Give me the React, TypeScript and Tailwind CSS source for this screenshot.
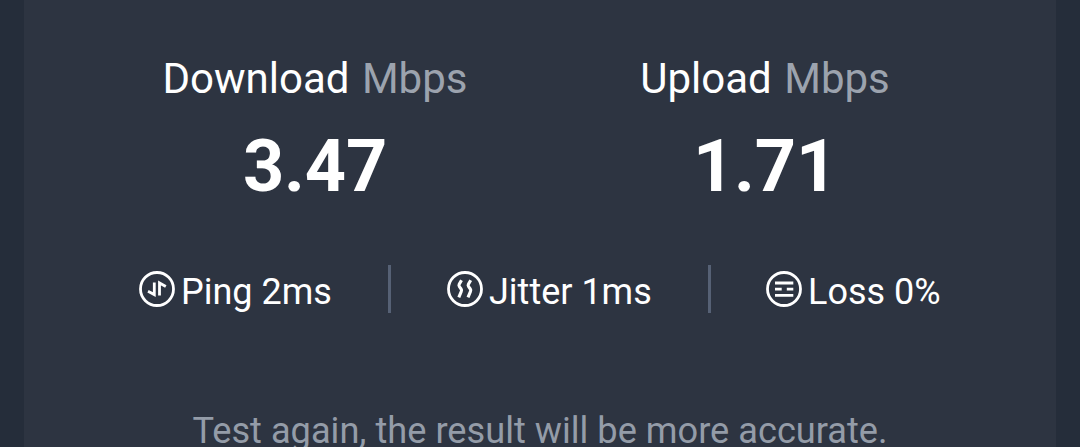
import type { ReactNode } from "react";

const speeds = [
  { label: "Download", value: "3.47", className: "w-[306px] ml-[138px]" },
  { label: "Upload", value: "1.71", className: "w-[250px] ml-[172px]" },
];

function Ring({ children }: { children: ReactNode }) {
  return (
    <svg
      className="w-9 h-9 shrink-0"
      viewBox="0 0 36 36"
      fill="none"
      stroke="currentColor"
      strokeWidth="2.8"
    >
      <circle cx="18" cy="18" r="16.5" />
      {children}
    </svg>
  );
}

export default function App() {
  return (
    <div className="h-[447px] overflow-hidden bg-[#252d3a] px-6 font-['Roboto',sans-serif] text-white">
      <div className="h-full bg-[#2d3441] pt-[54px]">
        <div className="flex">
          {speeds.map((s) => (
            <div key={s.label} className={`${s.className} text-center whitespace-nowrap`}>
              <div className="text-[42px] leading-[50px] [word-spacing:2px]">
                {s.label} <span className="text-[#9ca3ae]">Mbps</span>
              </div>
              <div className="mt-[21px] text-[72px] leading-[84px] font-bold tracking-[-0.2px]">{s.value}</div>
            </div>
          ))}
        </div>

        <div className="mt-[56px] ml-[115px] flex h-12 items-center text-[36px] whitespace-nowrap">
          <div className="flex w-[249px] items-center gap-[6px]">
            <Ring>
              <path d="M9 20.300l6.300 3.300V11.500M20.500 24.500V12l6.300 3.500" />
            </Ring>
            <span className="pt-[6px]">Ping 2ms</span>
          </div>
          <div className="h-12 w-[3px] bg-[#566175]" />
          <div className="ml-[56px] flex w-[261px] items-center gap-[6px]">
            <Ring>
              <path d="M14.500 9.200L12.200 13.300q-.6 1.200.2 2.300l1.700 2.400q.8 1.100.2 2.300L11.800 26.300M23.700 9.200l-2.300 4.100q-.6 1.200.2 2.300l1.700 2.400q.8 1.100.2 2.300L21 26.300" strokeWidth="3.1" />
            </Ring>
            <span className="pt-[6px]">Jitter 1ms</span>
          </div>
          <div className="h-12 w-[3px] bg-[#566175]" />
          <div className="ml-[55px] flex items-center gap-[6px]">
            <Ring>
              <path d="M9 12h18.300M9 18.200h6.700M20.800 18.200h6.500M9 24.300h18.300" />
            </Ring>
            <span className="pt-[6px]">Loss 0%</span>
          </div>
        </div>

        <p className="mt-[96px] text-center text-[36.200px] leading-[44px] text-[#949ca8]">
          Test again, the result will be more accurate.
        </p>
      </div>
    </div>
  );
}
